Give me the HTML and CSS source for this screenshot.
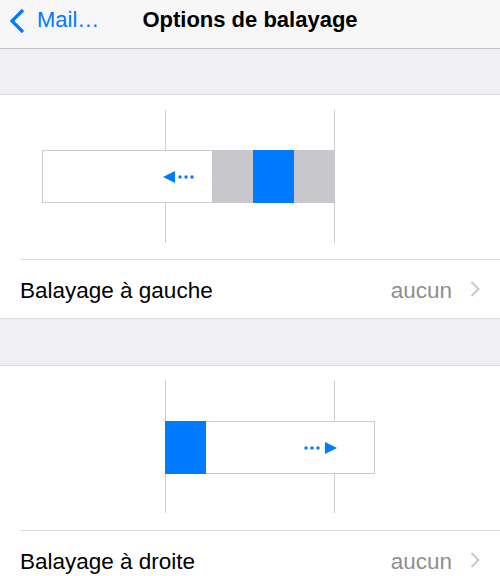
FILE: index.html
```html
<!DOCTYPE html>
<html lang="fr">
<head>
<meta charset="UTF-8">
<meta name="viewport" content="width=device-width, initial-scale=1.0">
<title>Options de balayage</title>
<link rel="stylesheet" href="styles.css">
</head>
<body>

<!-- Navigation bar -->
<div class="navbar">
    <a class="back" href="#">
        <svg class="back-chevron" width="18" height="26" viewBox="0 0 18 26">
            <polyline points="14,2 3,13 14,24" fill="none" stroke="#007aff" stroke-width="3.2" stroke-linecap="butt" stroke-linejoin="miter"/>
        </svg>
        <span>Mail…</span>
    </a>
    <div class="title">Options de balayage</div>
    <div></div>
</div>

<div class="group-gap"></div>

<!-- Swipe left -->
<div class="section">
    <div class="diagram">
        <svg width="500" height="164" viewBox="0 0 500 164">
            <line x1="165.5" y1="15" x2="165.5" y2="148" stroke="#cfcfd3" stroke-width="1"/>
            <line x1="334.5" y1="15" x2="334.5" y2="148" stroke="#cfcfd3" stroke-width="1"/>
            <rect x="42.5" y="55.5" width="170" height="52" fill="#fff" stroke="#cdcdcd" stroke-width="1"/>
            <rect x="212" y="55" width="123" height="53" fill="#c8c7cc"/>
            <rect x="253" y="55" width="41" height="53" fill="#007aff"/>
            <polygon points="163,82 175,76 175,88" fill="#007aff"/>
            <circle cx="180" cy="82" r="1.7" fill="#007aff"/>
            <circle cx="186" cy="82" r="1.7" fill="#007aff"/>
            <circle cx="192" cy="82" r="1.7" fill="#007aff"/>
        </svg>
    </div>
    <div class="row">
        <span class="row-label">Balayage à gauche</span>
        <span class="row-value">aucun</span>
        <svg class="disclosure" width="10" height="16" viewBox="0 0 10 16">
            <polyline points="1.5,1 8.5,8 1.5,15" fill="none" stroke="#c7c7cc" stroke-width="2"/>
        </svg>
    </div>
</div>

<div class="group-gap group-gap-tall"></div>

<!-- Swipe right -->
<div class="section">
    <div class="diagram">
        <svg width="500" height="164" viewBox="0 0 500 164">
            <line x1="165.5" y1="14" x2="165.5" y2="147" stroke="#cfcfd3" stroke-width="1"/>
            <line x1="334.5" y1="14" x2="334.5" y2="147" stroke="#cfcfd3" stroke-width="1"/>
            <rect x="165.5" y="55.5" width="209" height="52" fill="#fff" stroke="#cdcdcd" stroke-width="1"/>
            <rect x="165" y="55" width="41" height="53" fill="#007aff"/>
            <circle cx="306" cy="82" r="1.7" fill="#007aff"/>
            <circle cx="312" cy="82" r="1.7" fill="#007aff"/>
            <circle cx="318" cy="82" r="1.7" fill="#007aff"/>
            <polygon points="325,76 337,82 325,88" fill="#007aff"/>
        </svg>
    </div>
    <div class="row">
        <span class="row-label">Balayage à droite</span>
        <span class="row-value">aucun</span>
        <svg class="disclosure" width="10" height="16" viewBox="0 0 10 16">
            <polyline points="1.5,1 8.5,8 1.5,15" fill="none" stroke="#c7c7cc" stroke-width="2"/>
        </svg>
    </div>
</div>

</body>
</html>
```

FILE: styles.css
```css
body {
margin: 0;
font-family: "Liberation Sans", Arial, sans-serif;
background-color: #efeff4;
color: #000;
overflow: hidden;
}
.navbar {
display: grid;
grid-template-columns: 1fr auto 1fr;
align-items: start;
height: 48px;
background-color: #f7f7f7;
border-bottom: 1px solid #c4c4c8;
line-height: 40px;
}
.back {
display: flex;
align-items: center;
height: 40px;
padding-left: 9px;
color: #007aff;
text-decoration: none;
font-size: 22px;
}
.back-chevron {
margin-right: 10px;
margin-top: 2px;
}
.title {
font-size: 22px;
font-weight: bold;
}
.group-gap {
height: 45px;
border-bottom: 1px solid #dcdce0;
}
.group-gap-tall {
height: 46px;
}
.section {
background-color: #fff;
border-bottom: 1px solid #dcdce0;
}
.diagram {
height: 164px;
}
.diagram svg {
display: block;
}
.row {
display: flex;
align-items: center;
height: 58px;
margin-left: 20px;
padding-right: 20px;
border-top: 1px solid #dcdce0;
font-size: 22.5px;
}
.row-label {
flex: 1;
padding-top: 3px;
}
.row-value {
color: #8e8e93;
padding-top: 3px;
margin-right: 18px;
}
.disclosure {
display: block;
}
```
